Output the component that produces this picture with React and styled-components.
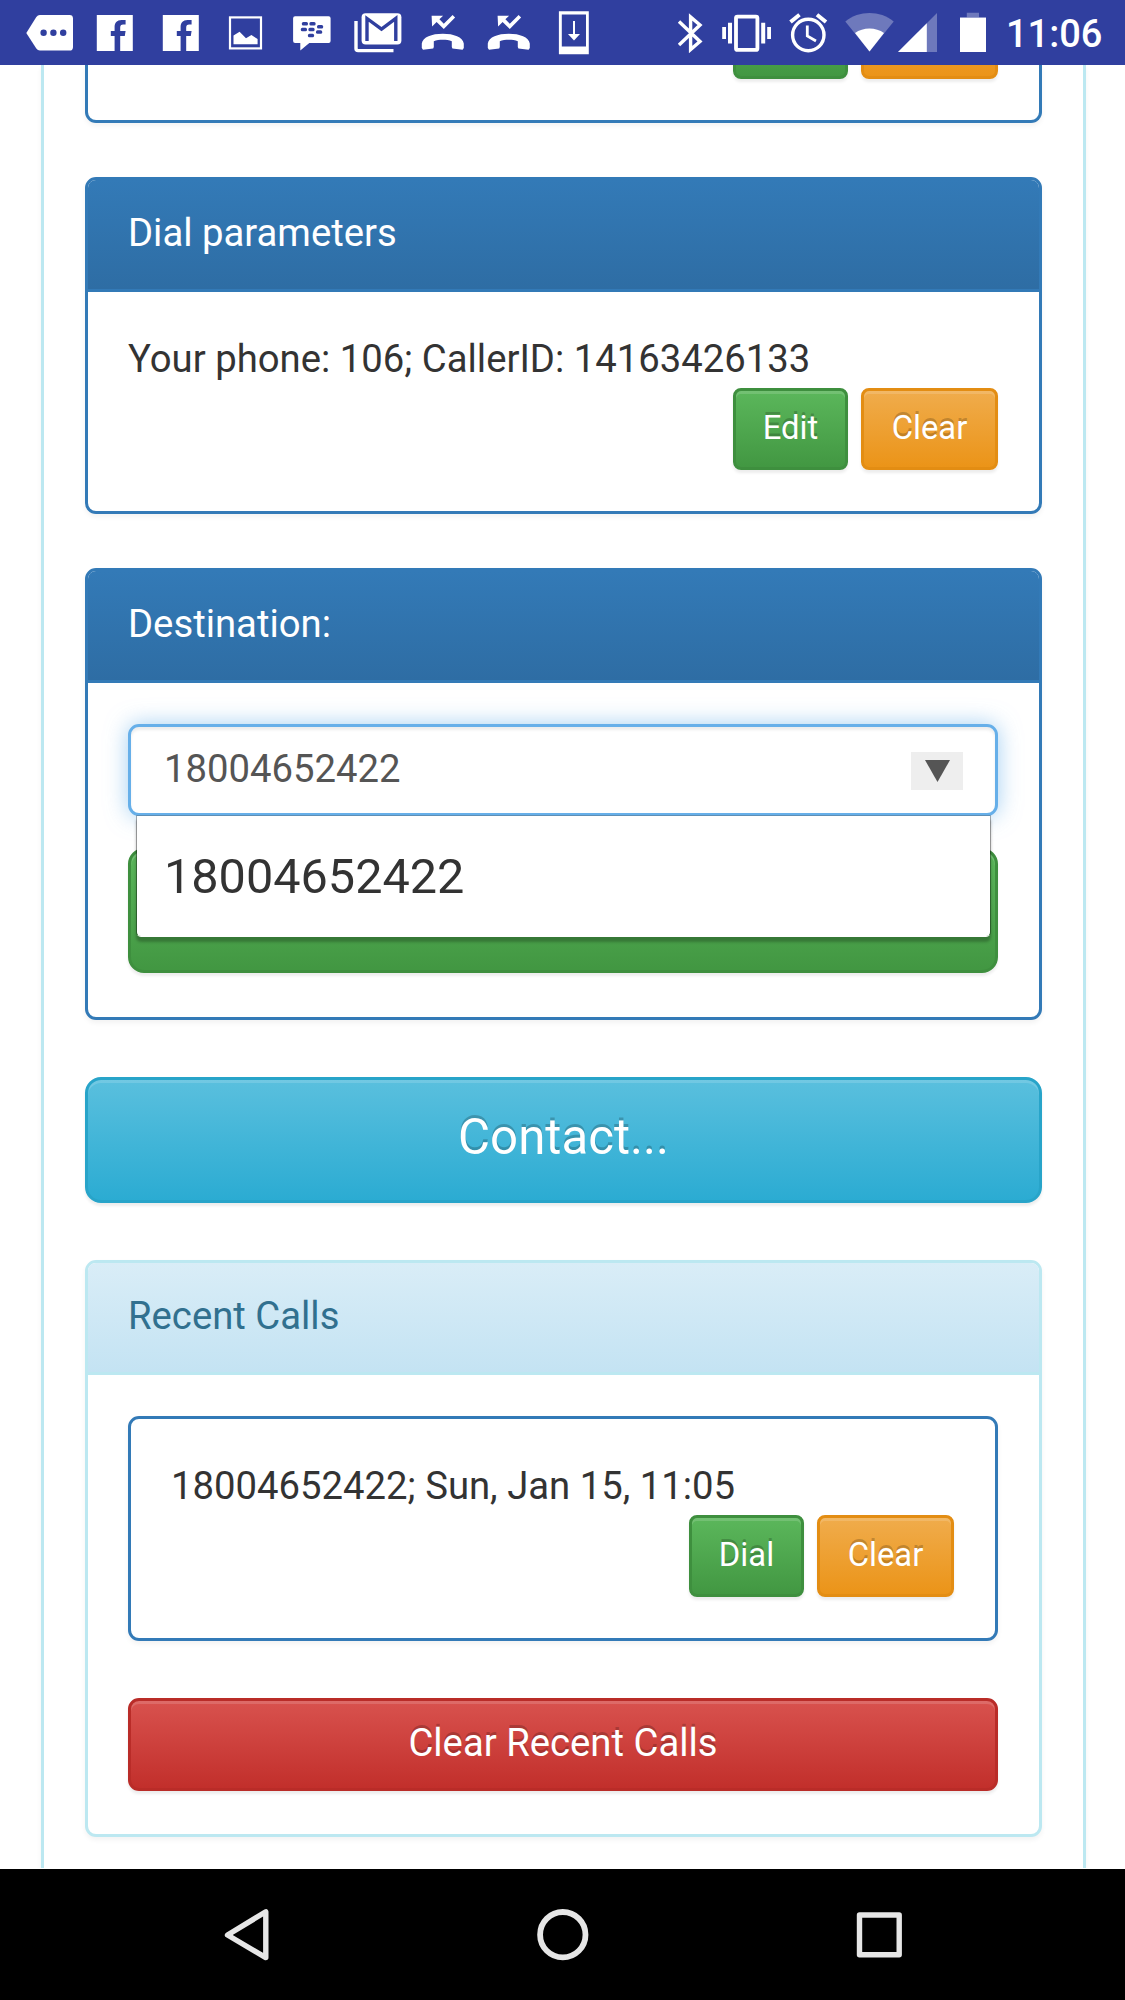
import React from 'react';
import styled, { createGlobalStyle, css } from 'styled-components';

const GlobalStyle = createGlobalStyle`
  * {
    box-sizing: border-box;
  }
  body {
    margin: 0;
    background: #fff;
    font-family: Roboto, 'Liberation Sans', sans-serif;
    font-size: 38.28px;
    line-height: 54.7px;
    color: #333;
  }
`;

const themes = {
  success: { from: '#5cb85c', to: '#419641', border: '#3e8f3e' },
  warning: { from: '#f0ad4e', to: '#eb9316', border: '#e38d13' },
  info: { from: '#5bc0de', to: '#2aabd2', border: '#28a4c9' },
  danger: { from: '#d9534f', to: '#c12e2a', border: '#b92c28' },
};

const Screen = styled.div`
  width: 1125px;
  height: 2000px;
  display: flex;
  flex-direction: column;
  overflow: hidden;
`;

const StatusBar = styled.header`
  height: 65px;
  flex: none;
  display: flex;
  justify-content: space-between;
  padding: 0 22px 0 16.7px;
  background: #303f9f;
`;

const IconGroup = styled.div`
  display: flex;
`;

const StatusIcon = styled.svg`
  display: block;
  flex: none;
  height: 65px;
  width: ${props => props.$width || '65.6px'};
  margin-right: ${props => props.$gap || '0'};
  fill: #fff;
`;

const Clock = styled.span`
  width: 97px;
  font-size: 38px;
  font-weight: 500;
  line-height: 68px;
  white-space: nowrap;
  color: #fff;
`;

const Page = styled.main`
  height: 1803px;
  margin-bottom: 1px;
  flex: none;
  padding: 0 39px 0 41px;
  overflow: hidden;
`;

const Outer = styled.div`
  height: 1803px;
  border: solid #bce8f1;
  border-width: 0 3px;
  padding: 0 41px;
  box-shadow: 0 3px 5px rgba(0, 0, 0, 0.05);
`;

const Panel = styled.section`
  height: ${props => props.$height};
  margin-top: ${props => props.$offset || '0'};
  margin-bottom: ${props => props.$gap || '0'};
  border: 3px solid ${props => (props.$info ? '#bce8f1' : '#337ab7')};
  border-radius: 11px;
  background: #fff;
  box-shadow: 0 3px 5px rgba(0, 0, 0, 0.05);
  ${props =>
    props.$cut &&
    css`
      border-top: 0;
      border-top-left-radius: 0;
      border-top-right-radius: 0;
      overflow: hidden;
    `}
`;

const Heading = styled.h3`
  height: 112px;
  margin: 0;
  padding: 26px 40px 0;
  font-size: inherit;
  font-weight: 400;
  border-radius: 8px 8px 0 0;
  ${props =>
    props.$info
      ? css`
          color: #31708f;
          background: linear-gradient(#d9edf7, #c4e3f3);
          border-bottom: 3px solid #bce8f1;
        `
      : css`
          color: #fff;
          background: linear-gradient(#337ab7, #2e6da4);
          border-bottom: 3px solid #337ab7;
        `}
`;

const Body = styled.div`
  padding: ${props => props.$top || '41px'} 41px 0 40px;
`;

const Line = styled.div`
  height: 55px;
  white-space: nowrap;
`;

const Actions = styled.div`
  display: flex;
  justify-content: flex-end;
  gap: 13px;
  margin-top: ${props => props.$top || '0'};
`;

const Button = styled.button`
  display: block;
  flex: none;
  width: ${props => props.$width || '100%'};
  height: ${props => props.$height || '82px'};
  padding: 0 0 ${props => props.$drop || '1px'};
  font-family: inherit;
  font-size: ${props => props.$size || '32.8px'};
  line-height: 1;
  color: #fff;
  text-shadow: 0 -3px 0 rgba(0, 0, 0, 0.2);
  border: 3px solid ${props => themes[props.$kind].border};
  border-radius: ${props => props.$radius || '8px'};
  background: linear-gradient(
      ${props => themes[props.$kind].from},
      ${props => themes[props.$kind].to}
    )
    border-box;
  box-shadow: inset 0 3px 0 rgba(255, 255, 255, 0.15),
    0 3px 3px rgba(0, 0, 0, 0.075);
`;

const Field = styled.div`
  position: relative;
  height: 92px;
  margin-bottom: 32px;
  display: flex;
  justify-content: space-between;
  padding: 15px 32px 0 33px;
  color: #555;
  background: #fff;
  border: 3px solid #66afe9;
  border-radius: 11px;
  box-shadow: inset 0 3px 3px rgba(0, 0, 0, 0.075),
    0 0 22px rgba(102, 175, 233, 0.6);
`;

const Toggle = styled.span`
  width: 52px;
  height: 38px;
  margin-top: 10px;
  background: #eee;

  svg {
    display: block;
  }
`;

const Suggestions = styled.ul`
  position: absolute;
  top: 88px;
  left: 5px;
  right: 4px;
  height: 122px;
  margin: 0;
  padding: 26px 27px 0;
  list-style: none;
  font-size: 48.6px;
  line-height: 70px;
  color: #333;
  background: #fff;
  border: 1px solid rgba(0, 0, 0, 0.3);
  border-top-color: #5f8fb5;
  border-bottom-color: #fff;
  border-radius: 0 0 5px 5px;
  background-clip: padding-box;
  box-shadow: 0 5px 3px rgba(0, 0, 0, 0.25);
`;

const NavBar = styled.nav`
  height: 131px;
  flex: none;
  display: flex;
  justify-content: space-between;
  align-items: flex-start;
  padding: 35px 217px 0 219px;
  background: #000;

  svg {
    fill: none;
    stroke: #e6e6e6;
    stroke-width: 5.4;
    stroke-linejoin: round;
  }
`;

const Notification = ({ children }) => (
  <StatusIcon viewBox='-32.8 0 65.6 65'>{children}</StatusIcon>
);

const Facebook = () => (
  <Notification>
    <path
      fillRule='evenodd'
      d='M-18 15H18V51H5.4V36H10L10.8 31H5.4V27.6C5.4 25.3 6.3 24.5 8.4 24.5H10.8V20H6.8C2 20-.2 23-.2 27.2V31H-4V36H-.2V51H-18Z'
    />
  </Notification>
);

const MissedCall = () => (
  <Notification>
    <path d='M-21 48V43.5C-20 37 -11 33.7 0 33.7S20 37 21 43.5V48L19.8 49.8L9.6 48.5L9 47V41.3C4 39.4-4 39.4-9 41.3V47L-9.6 48.5L-19.8 49.8Z' />
    <path d='M-11.2 15.8H.3L-3.4 19.3L1 23.7L9.8 15L12.3 17.5L1 28.9L-6.2 22.1L-10.7 26.6Z' />
  </Notification>
);

const recentCalls = [{ number: '18004652422', time: 'Sun, Jan 15, 11:05' }];

const App = () => {
  return (
    <Screen>
      <GlobalStyle />
      <StatusBar>
        <IconGroup>
          <Notification>
            <path d='M-23.5 33L-13.5 17Q-12 15-10 15H19.8Q23.2 15 23.2 18.4V47Q23.2 50.6 19.8 50.6H-10Q-12 50.6-13.5 48.5Z' />
            <g fill='#303f9f'>
              <circle cx='-6.2' cy='32.8' r='3.2' />
              <circle cx='3.6' cy='32.8' r='3.2' />
              <circle cx='13.4' cy='32.8' r='3.2' />
            </g>
          </Notification>
          <Facebook />
          <Facebook />
          <Notification>
            <rect
              x='-15.8'
              y='17.4'
              width='31'
              height='31'
              fill='none'
              stroke='#fff'
              strokeWidth='2.2'
            />
            <path d='M-12.3 35.5L-6.2 31.8L.2 38.3L5.6 35L11.8 39V44.3H-12.3Z' />
          </Notification>
          <Notification>
            <path d='M-16.7 16.3H16.8Q18.8 16.3 18.8 18.3V41Q18.8 43 16.8 43H-2.5L-11.5 50.6V43H-16.7Q-18.7 43-18.7 41V18.3Q-18.7 16.3-16.7 16.3Z' />
            <g fill='#303f9f'>
              <rect x='-10' y='22' width='6.2' height='3.6' rx='1.5' />
              <rect x='-2.4' y='22' width='6.2' height='3.6' rx='1.5' />
              <rect x='-11' y='27.7' width='6.2' height='3.6' rx='1.5' />
              <rect x='-3.4' y='27.7' width='6.2' height='3.6' rx='1.5' />
              <rect x='5.2' y='25' width='6.2' height='3.6' rx='1.5' />
              <rect x='4.2' y='30.2' width='6.2' height='3.6' rx='1.5' />
              <rect x='-3.9' y='33.7' width='6.2' height='3.6' rx='1.5' />
            </g>
          </Notification>
          <Notification>
            <path
              d='M-21.8 21V48.5Q-21.8 50.6-19.7 50.6H15.7'
              fill='none'
              stroke='#fff'
              strokeWidth='3.4'
            />
            <rect x='-16.2' y='13.2' width='39.8' height='31.3' rx='4' />
            <path
              d='M-10.8 41V18.5L3.7 29.2L18 18.5V41'
              fill='none'
              stroke='#303f9f'
              strokeWidth='3.4'
            />
          </Notification>
          <MissedCall />
          <MissedCall />
          <Notification>
            <path
              fillRule='evenodd'
              d='M-14.9 11.3H15V54.3H-14.9ZM-12 14.4V46.6H12.2V14.4Z'
            />
            <path d='M-.8 21H1.2V34H6.2L.2 40.6L-5.8 34H-.8Z' />
          </Notification>
        </IconGroup>
        <IconGroup>
          <StatusIcon viewBox='675 0 32 65' $width='32px' $gap='15px'>
            <path
              d='M679 21.5L700 41.5L690.6 49.5V17L700 25L679 45'
              fill='none'
              stroke='#fff'
              strokeWidth='3.4'
            />
          </StatusIcon>
          <StatusIcon viewBox='722 0 50 65' $width='50px' $gap='15px'>
            <rect
              x='736'
              y='16.6'
              width='21.4'
              height='33.3'
              rx='1.5'
              fill='none'
              stroke='#fff'
              strokeWidth='3.8'
            />
            <path d='M722.2 27H726V39H722.2ZM728 22.8H732V43.6H728ZM761.2 22.8H765.2V43.6H761.2ZM767.2 27H771V39H767.2Z' />
          </StatusIcon>
          <StatusIcon viewBox='787 0 42 65' $width='42px' $gap='15px'>
            <g fill='none' stroke='#fff' strokeWidth='3.4'>
              <circle cx='808.3' cy='35' r='15.7' />
              <path d='M790.5 22L799.5 14.8M826 22L817 14.8' strokeWidth='4' />
              <path d='M807.3 25.5V36L816 41' strokeWidth='2.8' />
            </g>
          </StatusIcon>
          <StatusIcon viewBox='844 0 50 65' $width='50px' $gap='3px'>
            <path
              opacity='0.3'
              d='M869.5 51.5L845.3 21.5C859 10.3 880 10.3 893.7 21.5Z'
            />
            <path d='M869.5 51.5L855 33C863 27 876 27 884 33Z' />
          </StatusIcon>
          <StatusIcon viewBox='897 0 42 65' $width='42px' $gap='20px'>
            <path opacity='0.3' d='M898 52L937 13V52Z' />
            <path d='M898 52L926.8 23.2V52Z' />
          </StatusIcon>
          <StatusIcon viewBox='959 0 28 65' $width='28px' $gap='19px'>
            <path opacity='0.3' d='M966.8 12.8H979V17.2H986V20H960V17.2H966.8Z' />
            <path d='M960 17.7H986V52H960Z' />
          </StatusIcon>
          <Clock>11:06</Clock>
        </IconGroup>
      </StatusBar>

      <Page>
        <Outer>
          <Panel $height='58px' $gap='54px' $cut>
            <Body $top='0'>
              <Actions $top='-68px'>
                <Button $kind='success' $width='115px' />
                <Button $kind='warning' $width='137px' />
              </Actions>
            </Body>
          </Panel>

          <Panel $height='337px' $gap='54px'>
            <Heading>Dial parameters</Heading>
            <Body $top='40px'>
              <Line>Your phone: 106; CallerID: 14163426133</Line>
              <Actions $top='1px'>
                <Button $kind='success' $width='115px'>
                  Edit
                </Button>
                <Button $kind='warning' $width='137px'>
                  Clear
                </Button>
              </Actions>
            </Body>
          </Panel>

          <Panel $height='452px' $gap='57px'>
            <Heading>Destination:</Heading>
            <Body>
              <Field>
                18004652422
                <Toggle>
                  <svg width='52' height='38' viewBox='0 0 52 38'>
                    <path d='M14 8H39L26.5 30Z' fill='#555' />
                  </svg>
                </Toggle>
                <Suggestions>
                  <li>18004652422</li>
                </Suggestions>
              </Field>
              <Button $kind='success' $height='125px' $radius='16px' />
            </Body>
          </Panel>

          <Button
            $kind='info'
            $height='126px'
            $radius='16px'
            $size='49.2px'
            $drop='4px'
          >
            Contact...
          </Button>

          <Panel $height='577px' $offset='57px' $info>
            <Heading $info>Recent Calls</Heading>
            <Body>
              {recentCalls.map(call => (
                <Panel $height='225px' $gap='57px' key={call.time}>
                  <Body $top='40px'>
                    <Line>
                      {call.number}; {call.time}
                    </Line>
                    <Actions $top='1px'>
                      <Button $kind='success' $width='115px'>
                        Dial
                      </Button>
                      <Button $kind='warning' $width='137px'>
                        Clear
                      </Button>
                    </Actions>
                  </Body>
                </Panel>
              ))}
              <Button
                $kind='danger'
                $height='93px'
                $radius='11px'
                $size='38.28px'
                $drop='3px'
              >
                Clear Recent Calls
              </Button>
            </Body>
          </Panel>
        </Outer>
      </Page>

      <NavBar>
        <svg width='55' height='62' viewBox='219 1904 55 62'>
          <path d='M265.8 1911.8V1957.6L227.5 1935Z' />
        </svg>
        <svg width='55' height='62' viewBox='536 1904 55 62'>
          <circle cx='562.8' cy='1934.7' r='22.7' strokeWidth='5.8' />
        </svg>
        <svg width='55' height='62' viewBox='853 1904 55 62'>
          <rect x='859.5' y='1915' width='39.7' height='39.7' />
        </svg>
      </NavBar>
    </Screen>
  );
};

export default App;
